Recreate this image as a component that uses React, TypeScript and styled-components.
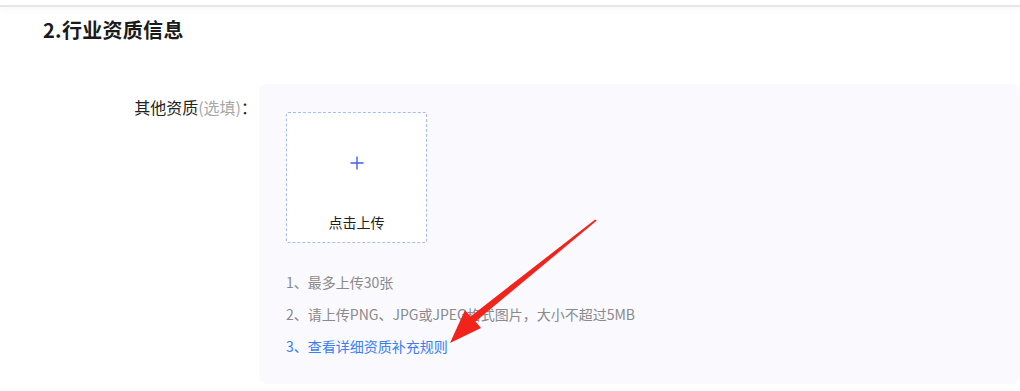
import React from "react";
import styled, { createGlobalStyle } from "styled-components";

const Global = createGlobalStyle`
  html, body { margin: 0; padding: 0; background: #fff; overflow: hidden; }
  body { font-family: "PingFang SC", "Noto Sans CJK SC", "Noto Sans", sans-serif; }
`;

const Page = styled.div`
  position: relative;
  width: 1020px;
  height: 391px;
  overflow: hidden;
`;

const TopBar = styled.div`
  height: 5px;
  border-bottom: 2px solid #e6e6e6;
  box-shadow: 0 3px 6px rgba(0, 0, 0, 0.035);
`;

const Heading = styled.h2`
  margin: 0;
  padding: 8px 0 0 43px;
  height: 30px;
  line-height: 30px;
  font-size: 20px;
  font-weight: 600;
  letter-spacing: 0.3px;
  color: #1a1a1a;
`;

const Row = styled.div`
  display: flex;
  margin-top: 39px;
`;

const Label = styled.div`
  width: 257px;
  flex-shrink: 0;
  text-align: right;
  padding-top: 12px;
  line-height: 22px;
  font-size: 16px;
  color: #222;
  margin-right: 2px;
  white-space: nowrap;
`;

const Optional = styled.span`
  color: #a8a8a8;
`;

const Panel = styled.div`
  width: 800px;
  height: 300px;
  box-sizing: border-box;
  background: #f9f9fe;
  border-radius: 8px;
  padding: 28px 27px;
`;

const UploadBox = styled.div`
  width: 141px;
  height: 131px;
  box-sizing: border-box;
  border: 1px dashed #a9bbf6;
  border-radius: 2px;
  background: #fff;
  display: flex;
  flex-direction: column;
  align-items: center;
`;

const Plus = styled.div`
  margin-top: 42px;
  height: 16px;
  display: flex;
  align-items: center;
  justify-content: center;
`;

const UploadText = styled.div`
  margin-top: 42px;
  font-size: 14px;
  line-height: 18px;
  color: #1f1f1f;
`;

const Tips = styled.div`
  margin-top: 23px;
`;

const Tip = styled.div<{ $link?: boolean }>`
  font-size: 14px;
  line-height: 32.2px;
  color: ${(p) => (p.$link ? "#3a7ef6" : "#8a8a8a")};
  white-space: nowrap;
`;

const Arrow = styled.svg`
  position: absolute;
  left: 0;
  top: 0;
  pointer-events: none;
`;

export default function App() {
  return (
    <>
      <Global />
      <Page>
        <TopBar />
        <Heading>2.行业资质信息</Heading>
        <Row>
          <Label>
            其他资质<Optional>(选填)</Optional>：
          </Label>
          <Panel>
            <UploadBox>
              <Plus>
                <svg width="14" height="14" viewBox="0 0 14 14">
                  <path d="M7 0.5V13.5M0.5 7H13.5" stroke="#3d5ef0" strokeWidth="1.4" />
                </svg>
              </Plus>
              <UploadText>点击上传</UploadText>
            </UploadBox>
            <Tips>
              <Tip>1、最多上传30张</Tip>
              <Tip>2、请上传PNG、JPG或JPEG格式图片，大小不超过5MB</Tip>
              <Tip $link>3、查看详细资质补充规则</Tip>
            </Tips>
          </Panel>
        </Row>
        <Arrow width="1020" height="391" viewBox="0 0 1020 391">
          <polygon
            points="596.8,220.6 595.2,219.4 470.5,316.5 465,310 450,343 481,328 475.5,321.5"
            fill="#f2231b"
          />
        </Arrow>
      </Page>
    </>
  );
}
